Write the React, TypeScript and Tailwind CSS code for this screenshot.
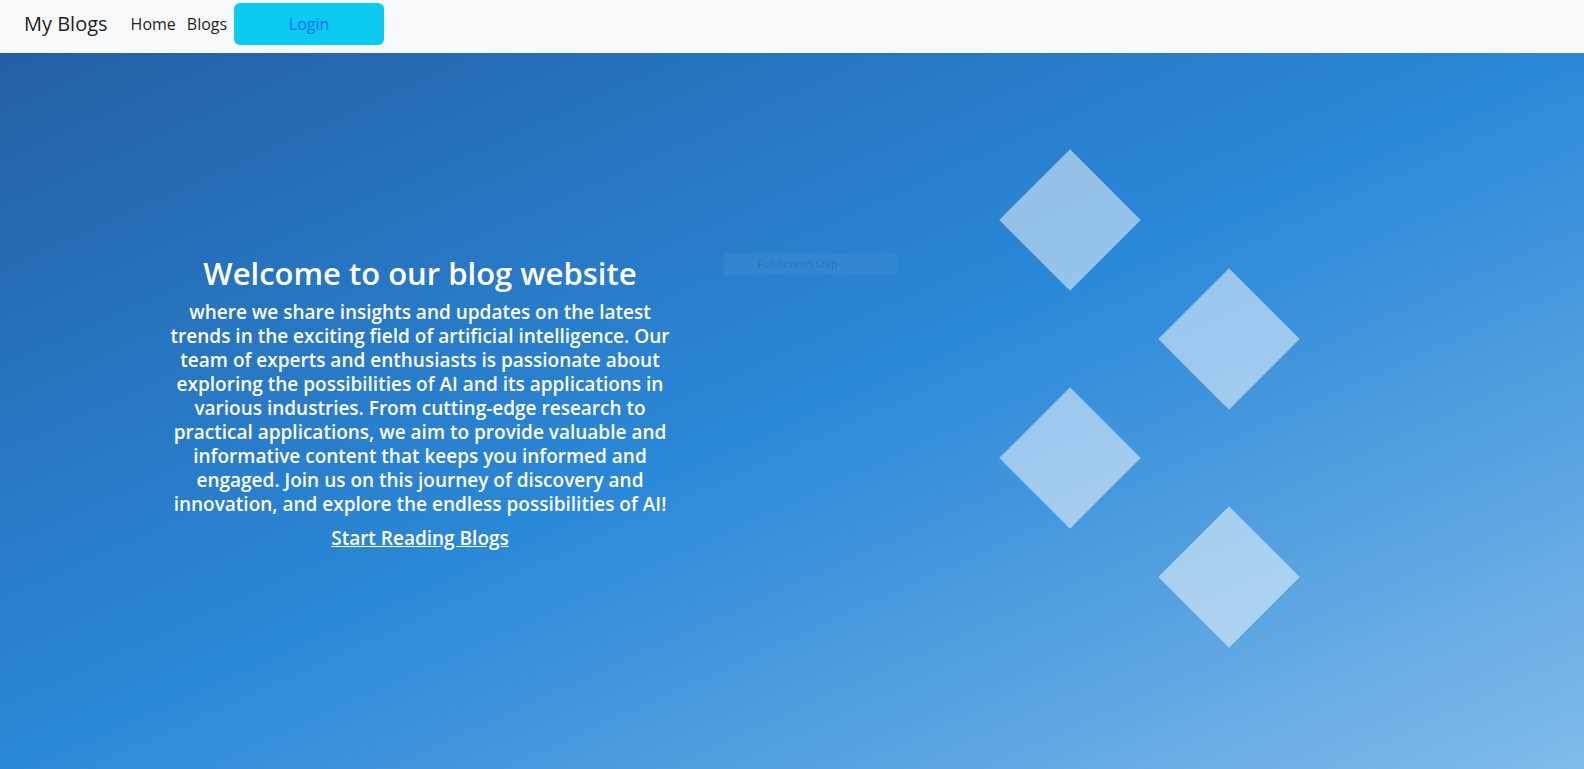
import React from "react";

const font = { fontFamily: '"Open Sans", "Noto Sans", sans-serif' };

function Diamond({ right }: { right?: boolean }) {
  return (
    <div className={right ? "ml-[159px] h-[100px] w-[100px]" : "h-[100px] w-[100px]"}>
      <div className="h-[100px] w-[100px] rotate-45 bg-white/50" />
    </div>
  );
}

export default function App() {
  return (
    <div className="min-h-screen w-full" style={font}>
      <nav className="flex h-[53px] items-center bg-[#f8f9fa] pb-[5px] pl-[24px]">
        <span className="text-[20px] leading-[30px] text-black/90">My Blogs</span>
        <a className="ml-[23px] text-[16px] text-black/90">Home</a>
        <a className="ml-[11px] text-[16px] text-black/90">Blogs</a>
        <button className="ml-[7px] flex h-[42px] w-[150px] items-center justify-center rounded-[6px] bg-[#0dcaf0] text-[16px] text-[#0d6efd]">
          Login
        </button>
      </nav>
      <main className="relative flex h-[716px] w-full items-start bg-[linear-gradient(to_bottom_right,#2360a6_0%,#2b88d8_50%,#80bbea_100%)]">
        <div className="flex w-[840px] justify-center pt-[201px]">
          <div className="flex w-[520px] flex-col items-center text-center text-white">
            <h2 className="mb-[8px] text-[31px] font-semibold leading-[38px]">Welcome to our blog website</h2>
            <p className="text-[19px] font-semibold leading-[24px]">
              where we share insights and updates on the latest trends in the exciting field of artificial
              intelligence. Our team of experts and enthusiasts is passionate about exploring the possibilities
              of AI and its applications in various industries. From cutting-edge research to practical
              applications, we aim to provide valuable and informative content that keeps you informed and
              engaged. Join us on this journey of discovery and innovation, and explore the endless
              possibilities of AI!
            </p>
            <a className="mt-[10px] text-[19px] font-semibold leading-[24px] underline">Start Reading Blogs</a>
          </div>
        </div>
        <div className="ml-[180px] flex flex-col gap-[19px] pt-[117px]">
          <Diamond />
          <Diamond right />
          <Diamond />
          <Diamond right />
        </div>
        <div className="absolute left-[724px] top-[200px] flex h-[22px] w-[173px] items-center bg-white/[0.04] pl-[33px] text-[11px] text-black/[0.13]">
          Full-screen Snip
        </div>
      </main>
    </div>
  );
}
